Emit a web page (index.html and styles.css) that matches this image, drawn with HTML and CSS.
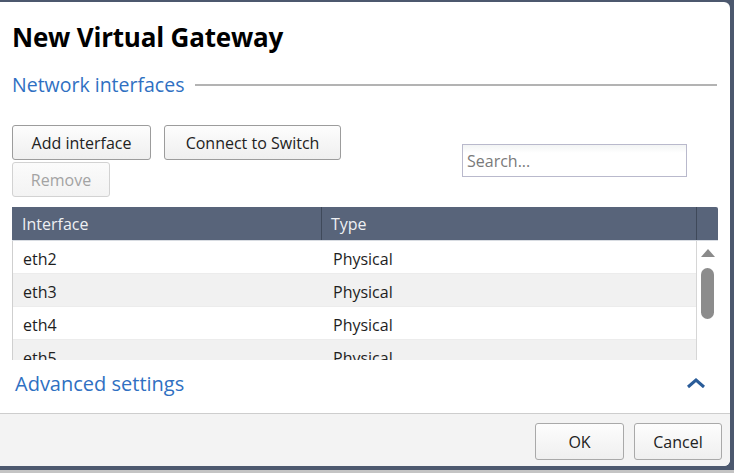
FILE: index.html
```html
<!DOCTYPE html>
<html>
<head>
<meta charset="utf-8">
<link rel="stylesheet" href="styles.css">
</head>
<body>
<div class="screen">
  <div class="dialog">
    <div class="content">
      <h1 class="title">New Virtual Gateway</h1>
      <div class="section-head">
        <span class="section-label">Network interfaces</span>
        <div class="rule"></div>
      </div>
      <div class="toolbar">
        <div class="btn-group">
          <div class="btn-row">
            <button class="btn btn-add">Add interface</button>
            <button class="btn btn-connect">Connect to Switch</button>
          </div>
          <div class="btn-row">
            <button class="btn btn-remove" disabled>Remove</button>
          </div>
        </div>
        <input class="search" type="text" placeholder="Search...">
      </div>
      <div class="grid">
        <div class="grid-head">
          <div class="hcell hc1">Interface</div>
          <div class="hcell hc2">Type</div>
          <div class="hcell hc3"></div>
        </div>
        <div class="grid-body">
          <div class="rows">
            <div class="row"><div class="cell c1">eth2</div><div class="cell c2">Physical</div></div>
            <div class="row alt"><div class="cell c1">eth3</div><div class="cell c2">Physical</div></div>
            <div class="row"><div class="cell c1">eth4</div><div class="cell c2">Physical</div></div>
            <div class="row alt"><div class="cell c1">eth5</div><div class="cell c2">Physical</div></div>
          </div>
          <div class="scrollbar">
            <div class="arrow"></div>
            <div class="thumb"></div>
          </div>
        </div>
      </div>
      <div class="advanced">
        <span class="adv-label">Advanced settings</span>
        <svg class="chevron" width="20" height="11" viewBox="0 0 20 11"><polyline points="2,9 10,2 18,9" fill="none" stroke="#2a5c99" stroke-width="3"/></svg>
      </div>
    </div>
    <div class="footer">
      <button class="btn fbtn btn-ok">OK</button>
      <button class="btn fbtn btn-cancel">Cancel</button>
    </div>
  </div>
  <div class="ground"></div>
</div>
</body>
</html>
```

FILE: styles.css
```css
html, body {
  margin: 0;
  padding: 0;
}
body {
  background: #4c586e;
  font-family: "Open Sans", "Noto Sans", sans-serif;
  color: #222;
  width: 734px;
  height: 473px;
  overflow: hidden;
}
.screen {
  display: flex;
  flex-direction: column;
  height: 473px;
}
.dialog {
  margin-top: 2px;
  width: 730px;
  height: 464px;
  background: #fff;
  border-radius: 0 6px 6px 0;
  display: flex;
  flex-direction: column;
  overflow: hidden;
}
.ground {
  margin-top: 4px;
  height: 3px;
  background: #c4c4c4;
}
.content {
  flex: 1;
  padding: 0 12px 0 12px;
  display: flex;
  flex-direction: column;
}
.title {
  margin: 0;
  padding-top: 18px;
  height: 34px;
  font-size: 26px;
  line-height: 34px;
  font-weight: 700;
  color: #000;
  letter-spacing: -0.2px;
}
.section-head {
  display: flex;
  align-items: center;
  height: 28px;
  margin-top: 17px;
}
.section-label {
  font-size: 19.5px;
  color: #2f70c2;
  line-height: 28px;
}
.rule {
  flex: 1;
  height: 2px;
  background: #b3b3b3;
  margin-left: 11px;
  margin-right: 1px;
}
.toolbar {
  display: flex;
  margin-top: 26px;
  align-items: flex-start;
}
.btn-group {
  display: flex;
  flex-direction: column;
  gap: 2px;
}
.btn-row {
  display: flex;
  gap: 13px;
}
.btn {
  font-family: "Open Sans", "Noto Sans", sans-serif;
  font-size: 16px;
  color: #222;
  height: 35px;
  padding: 0;
  border: 1px solid #9c9c9c;
  border-radius: 3px;
  background: linear-gradient(#fdfdfd, #efefef);
}
.btn-add { width: 139px; }
.btn-connect { width: 177px; }
.btn-remove {
  width: 98px;
  color: #a3a3a3;
  border-color: #d2d2d2;
  background: linear-gradient(#fbfbfb, #f3f3f3);
}
.search {
  margin-left: auto;
  margin-right: 31px;
  margin-top: 19px;
  width: 225px;
  height: 33px;
  box-sizing: border-box;
  border: 1px solid #b9b9cc;
  padding: 0 4px;
  font-family: "Open Sans", "Noto Sans", sans-serif;
  font-size: 16px;
  color: #222;
  background: linear-gradient(#f2f4f4, #fff 8px);
  outline: none;
}
.search::placeholder { color: #7a7a7a; }
.grid {
  margin-top: 10px;
  display: flex;
  flex-direction: column;
}
.grid-head {
  display: flex;
  height: 33px;
  background: #58647a;
  border-bottom: 1px solid #d8dce2;
  border-top-right-radius: 2px;
}
.hcell {
  color: #eef0f3;
  font-size: 16px;
  line-height: 35px;
  box-sizing: border-box;
}
.hc1 { width: 310px; padding-left: 10px; border-right: 1px solid #3f495a; }
.hc2 { width: 375px; padding-left: 9px; border-right: 1px solid #3f495a; }
.hc3 { flex: 1; }
.grid-body {
  display: flex;
  height: 119px;
  overflow: hidden;
  border-left: 1px solid #cfcfcf;
}
.rows {
  width: 683px;
  display: flex;
  flex-direction: column;
}
.row {
  display: flex;
  flex: none;
  height: 33px;
  background: #fff;
  border-bottom: 1px solid #ececec;
  box-sizing: border-box;
}
.row.alt { background: #f1f1f1; }
.cell {
  font-size: 16px;
  line-height: 32px;
  padding-top: 2px;
  color: #1e1e1e;
  box-sizing: border-box;
}
.c1 { width: 310px; padding-left: 10px; }
.c2 { flex: 1; padding-left: 10px; }
.scrollbar {
  flex: 1;
  border-left: 1px solid #d6d6d6;
  display: flex;
  flex-direction: column;
  align-items: center;
  background: #fff;
}
.arrow {
  margin-top: 8px;
  width: 0;
  height: 0;
  border-left: 7px solid transparent;
  border-right: 7px solid transparent;
  border-bottom: 8px solid #8a8a8a;
}
.thumb {
  margin-top: 11px;
  width: 13px;
  height: 51px;
  border-radius: 7px;
  background: #8c8c8c;
}
.advanced {
  display: flex;
  align-items: center;
  justify-content: space-between;
  height: 53px;
  padding-left: 3px;
  padding-right: 12px;
}
.adv-label {
  font-size: 20px;
  color: #2f70c2;
  margin-top: -7px;
}
.chevron {
  margin-top: -7px;
}
.footer {
  height: 52px;
  border-top: 1px solid #cdcdcd;
  background: #f3f3f3;
  display: flex;
  justify-content: flex-end;
  align-items: flex-start;
  gap: 10px;
  padding-right: 8px;
}
.fbtn {
  margin-top: 9px;
  height: 37px;
  border-color: #a9a9a9;
}
.btn-ok { width: 89px; }
.btn-cancel { width: 88px; }
```
